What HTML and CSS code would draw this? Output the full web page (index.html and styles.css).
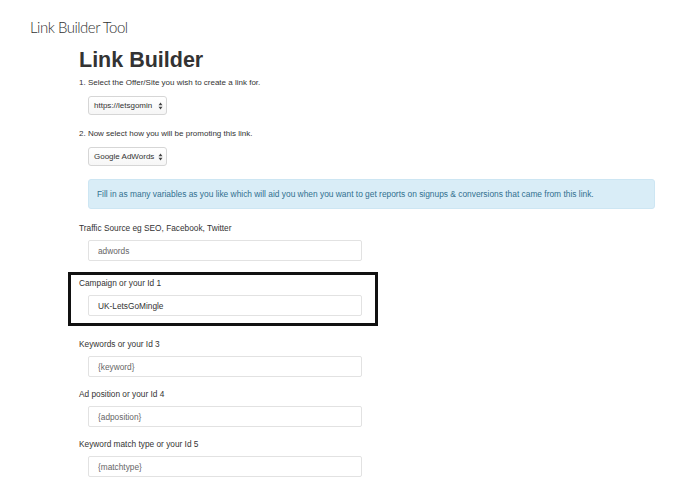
FILE: index.html
```html
<!DOCTYPE html>
<html lang="en">
<head>
  <meta charset="UTF-8">
  <title>Link Builder Tool</title>
  <link rel="stylesheet" href="styles.css">
</head>
<body>
  <div class="topbar">Link Builder Tool</div>

  <div class="container">
    <h1>Link Builder</h1>

    <p class="step">1. Select the Offer/Site you wish to create a link for.</p>
    <div class="select">
      <span class="select-text">https://letsgomin</span>
      <svg class="arrows" width="5" height="8" viewBox="0 0 5 8"><path d="M0.5 3.2 L2.5 0.6 L4.5 3.2 Z M0.5 4.8 L2.5 7.4 L4.5 4.8 Z" fill="#444"/></svg>
    </div>

    <p class="step">2. Now select how you will be promoting this link.</p>
    <div class="select">
      <span class="select-text">Google AdWords</span>
      <svg class="arrows" width="5" height="8" viewBox="0 0 5 8"><path d="M0.5 3.2 L2.5 0.6 L4.5 3.2 Z M0.5 4.8 L2.5 7.4 L4.5 4.8 Z" fill="#444"/></svg>
    </div>

    <div class="alert">Fill in as many variables as you like which will aid you when you want to get reports on signups &amp; conversions that came from this link.</div>

    <div class="form-group">
      <label>Traffic Source eg SEO, Facebook, Twitter</label>
      <input type="text" value="adwords">
    </div>

    <div class="form-group highlight">
      <label>Campaign or your Id 1</label>
      <input type="text" value="UK-LetsGoMingle" class="dark">
    </div>

    <div class="form-group">
      <label>Keywords or your Id 3</label>
      <input type="text" value="{keyword}">
    </div>

    <div class="form-group">
      <label>Ad position or your Id 4</label>
      <input type="text" value="{adposition}">
    </div>

    <div class="form-group">
      <label>Keyword match type or your Id 5</label>
      <input type="text" value="{matchtype}">
    </div>
  </div>
</body>
</html>
```

FILE: styles.css
```css
body {
  font-family: "Liberation Sans", Arial, sans-serif;
  background-color: #fff;
  color: #333;
  margin: 0;
}

.topbar {
  font-family: Lato, "Liberation Sans", sans-serif;
  font-weight: 300;
  font-size: 15px;
  line-height: 18px;
  color: #333;
  padding: 18px 0 0 30px;
  letter-spacing: -0.5px;
}

.container {
  margin-left: 79px;
  width: 576px;
}

h1 {
  font-size: 21.5px;
  line-height: 24px;
  font-weight: bold;
  margin: 12px 0 5px 0;
  color: #333;
}

.step {
  font-size: 8px;
  line-height: 12px;
  margin: 0 0 7px 0;
}

.select {
  display: flex;
  align-items: center;
  width: 79px;
  height: 19px;
  box-sizing: border-box;
  margin: 0 0 13px 9px;
  padding: 0 3px 0 5px;
  border: 1px solid #d6d6d6;
  border-radius: 3px;
  background: linear-gradient(#fff, #f6f6f6);
  font-size: 8px;
  color: #333;
}

.select-text {
  flex: 1;
  white-space: nowrap;
}

.arrows {
  flex: none;
  margin-left: 2px;
}

.alert {
  margin: 0 0 13px 9px;
  height: 30px;
  box-sizing: border-box;
  display: flex;
  align-items: center;
  padding: 0 8px;
  background-color: #d9edf7;
  border: 1px solid #cde6f3;
  border-radius: 3px;
  color: #31708f;
  font-size: 8.4px;
}

.form-group {
  margin-bottom: 11px;
}

.form-group label {
  display: block;
  font-size: 8.3px;
  line-height: 12px;
  margin-bottom: 6px;
}

.form-group input {
  display: block;
  box-sizing: border-box;
  width: 274px;
  height: 21px;
  margin-left: 9px;
  padding: 0 9px;
  border: 1px solid #e2e2e2;
  border-radius: 2px;
  font-family: "Liberation Sans", Arial, sans-serif;
  font-size: 8.3px;
  color: #666;
  background: #fff;
}

.form-group input.dark {
  color: #333;
}

.highlight {
  width: 310px;
  box-sizing: border-box;
  margin: 6px 0 12px -11px;
  padding: 2px 0 7px 8px;
  border: 3px solid #111;
}
```
